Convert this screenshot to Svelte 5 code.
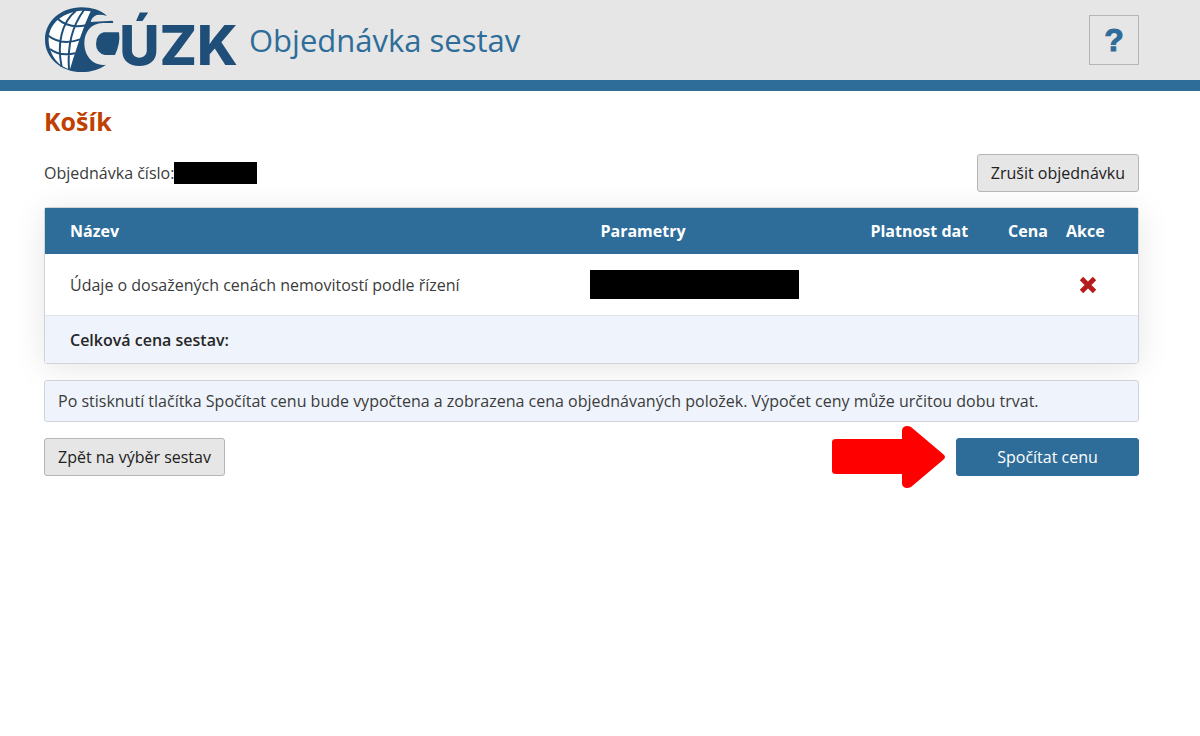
<script>
	const columns = [
		{ label: 'Název', key: 'name' },
		{ label: 'Parametry', key: 'parameters' },
		{ label: 'Platnost dat', key: 'validity' },
		{ label: 'Cena', key: 'price' },
		{ label: 'Akce', key: 'action' },
	];
	let items = $state([
		{ id: 1, name: 'Údaje o dosažených cenách nemovitostí podle řízení' },
	]);

	function removeItem(id) {
		items = items.filter((item) => item.id !== id);
	}
</script>

<header>
	<div class="container bar">
		<a class="brand" href="#home">
			<svg class="logo" viewBox="24 15 588 210" role="img" aria-label="ČÚZK">
				<!-- globe -->
				<path d="M213 48C195 30 165 22 137 22C75 22 27 64 27 119C27 174 75 216 137 216C165 216 190 209 210 194C170 200 145 166 145 130C145 96 165 70 200 69H232L230 62L176 65L164 66C166 56 172 49 182 45Q198 43 213 48Z" fill="#1f4e79" />
				<path d="M112 36C130 31 148 31 164 34C144 76 126 130 102 208C66 200 36 160 38 114C40 76 70 47 112 36Z" fill="#fff" />
				<path d="M119 33C78 66 62 130 77 200M144 30C108 78 94 140 99 208M66 57C88 78 118 82 150 76M35 106C60 126 94 132 132 118M42 147C62 163 88 166 118 160" fill="none" stroke="#1f4e79" stroke-width="6" />
				<path d="M203 97H249Q254 130 237 165H207Q180 158 180 131Q180 104 203 97Z" fill="#1f4e79" />
				<text x="250" y="194" font-size="166">ÚZK</text>
			</svg>
			<span>Objednávka sestav</span>
		</a>
		<button class="help" aria-label="Nápověda">?</button>
	</div>
</header>

<main class="container">
	<h1>Košík</h1>
	<div class="row">
		<p class="order">Objednávka číslo:<span class="redacted"></span></p>
		<button>Zrušit objednávku</button>
	</div>

	<table>
		<thead>
			<tr>
				{#each columns as column}
					<th scope="col" class={column.key}>{column.label}</th>
				{/each}
			</tr>
		</thead>
		<tbody>
			{#each items as item (item.id)}
				<tr>
					<td>{item.name}</td>
					<td class="params"><span class="redacted wide"></span></td>
					<td></td>
					<td></td>
					<td class="controls">
						<button class="remove" aria-label="Odstranit" onclick={() => removeItem(item.id)}>
							<svg viewBox="0 0 20 20" width="20" height="20">
								<path d="M4 4L16 16M16 4L4 16" stroke="#b71c1c" stroke-width="6" stroke-linecap="square" stroke-linejoin="round" transform="translate(2 2) scale(.8)" />
							</svg>
						</button>
					</td>
				</tr>
			{/each}
		</tbody>
		<tfoot>
			<tr>
				<td colspan="5">Celková cena sestav:</td>
			</tr>
		</tfoot>
	</table>

	<p class="info">Po stisknutí tlačítka Spočítat cenu bude vypočtena a zobrazena cena objednávaných položek. Výpočet ceny může určitou dobu trvat.</p>

	<div class="row">
		<button>Zpět na výběr sestav</button>
		<div class="submit">
			<svg class="arrow" viewBox="0 0 114 64" width="114" height="64" aria-hidden="true">
				<path d="M4 14H70V5Q71 1 75 1Q77 1 79 2L111 29Q115 32 111 35L79 62Q77 63 75 63Q71 63 70 59V49H4Q0 49 0 46V17Q0 14 4 14Z" fill="#f00" />
			</svg>
			<button class="primary">Spočítat cenu</button>
		</div>
	</div>
</main>

<style>
	:global(body) {
		background: #fff;
		color: #3b3b3b;
		font: 16px/24px "Open Sans", "Noto Sans", sans-serif;
	}
	header {
		background: #e6e6e6;
		border-bottom: 11px solid #2e6d99;
	}
	.container {
		margin: 0 61px 0 44px;
	}
	main {
		padding-bottom: 32px;
	}
	.bar,
	.row,
	.brand,
	.submit {
		display: flex;
		align-items: center;
	}
	.bar,
	.row {
		justify-content: space-between;
	}
	.bar {
		height: 80px;
	}
	.brand {
		gap: 9px;
		color: #2e6d99;
		font-size: 31px;
		line-height: 40px;
		text-decoration: none;
	}
	.logo {
		width: 196px;
		height: 70px;
		overflow: visible;
	}
	.logo text {
		fill: #1f4e79;
		font-family: Inter, "Open Sans", sans-serif;
		font-weight: 800;
	}
	button {
		box-sizing: border-box;
		height: 38px;
		padding: 0 13px;
		border: 1px solid #b5b5b5;
		border-radius: 3px;
		background: #e6e6e6;
		color: #212121;
		font: inherit;
		cursor: pointer;
	}
	.help {
		width: 50px;
		height: 50px;
		padding: 0;
		border-radius: 0;
		color: #2e6d99;
		font-family: "Liberation Sans", sans-serif;
		font-size: 32px;
		font-weight: 700;
		-webkit-text-stroke: 1px #2e6d99;
	}
	h1 {
		margin: 0;
		padding: 14px 0 16px;
		color: #c04000;
		font-size: 25px;
		line-height: 33px;
	}
	.order {
		display: flex;
		align-items: center;
		margin: 0;
	}
	.redacted {
		display: block;
		width: 83px;
		height: 22px;
		background: #000;
	}
	.wide {
		width: 209px;
		height: 29px;
	}
	table {
		width: 100%;
		margin: 15px 0 16px;
		border: 1px solid #d0d3d8;
		border-radius: 3px;
		border-spacing: 0;
		box-shadow: 0 4px 32px rgba(0, 0, 0, 0.1);
		table-layout: fixed;
	}
	th {
		height: 46px;
		padding: 0 10px;
		background: #2e6d99;
		color: #fff;
		text-align: left;
		white-space: nowrap;
	}
	.name {
		width: 49.9%;
	}
	.parameters {
		width: 24.7%;
	}
	.validity {
		width: 12.6%;
	}
	.price {
		width: 5.3%;
	}
	.action {
		width: 7.5%;
	}
	td {
		height: 61px;
		padding: 0 10px;
	}
	th,
	td {
		box-sizing: border-box;
	}
	th:first-child,
	td:first-child {
		padding-left: 25px;
	}
	tfoot td {
		height: 48px;
		border-top: 1px solid #e3e6ea;
		background: #eff4fc;
		color: #262626;
		font-weight: 600;
	}
	.params {
		padding-left: 0;
	}
	.controls {
		padding-left: 22px;
	}
	.remove {
		display: block;
		height: 20px;
		padding: 0;
		border: 0;
		background: none;
	}
	.remove svg {
		display: block;
	}
	.info {
		margin: 0 0 16px;
		padding: 8px 13px;
		border: 1px solid #d0d3d8;
		border-radius: 3px;
		background: #eff4fc;
	}
	.submit {
		gap: 10px;
	}
	.arrow {
		margin: -13px 0;
	}
	.primary {
		width: 183px;
		border-color: #2e6d99;
		background: #2e6d99;
		color: #fff;
	}
</style>
